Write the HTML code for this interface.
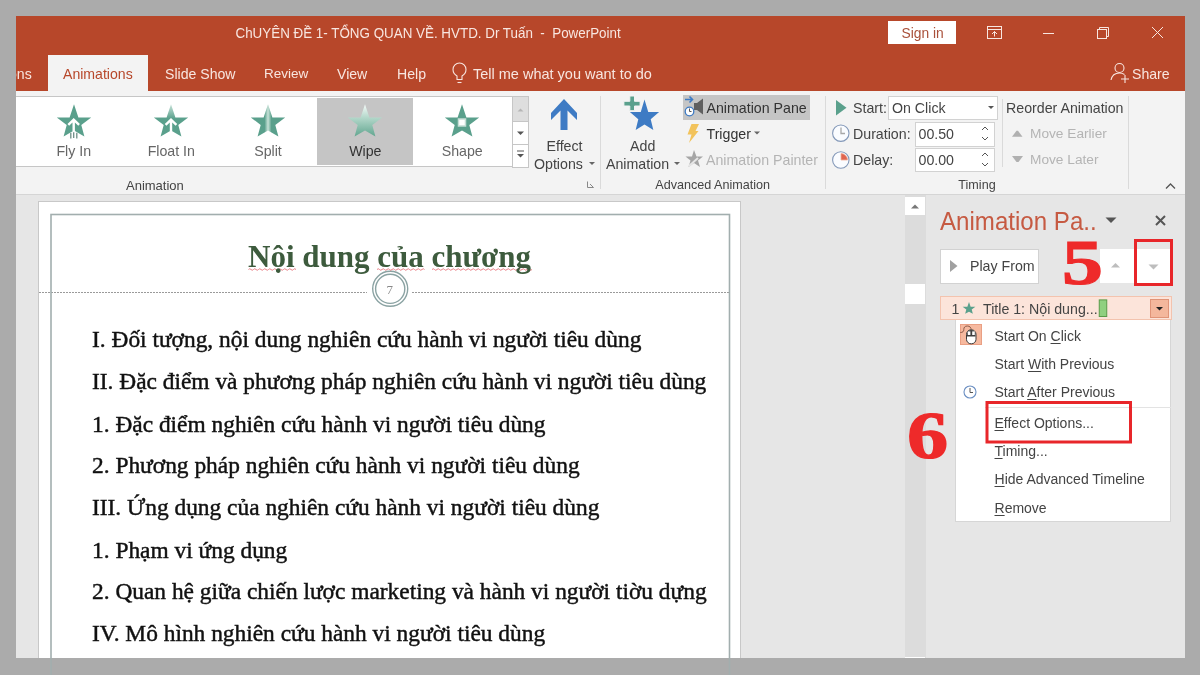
<!DOCTYPE html>
<html><head><meta charset="utf-8">
<style>
*{margin:0;padding:0;box-sizing:border-box}
html,body{width:1200px;height:675px;overflow:hidden;background:#ababab;font-family:"Liberation Sans",sans-serif}
.a{position:absolute}
.t{position:absolute;white-space:nowrap;line-height:1;font-size:14.2px;color:#444}
.c{width:120px;text-align:center}
svg{position:absolute;overflow:visible}
.tab{color:#f8e6e0;font-size:14.1px;top:66.5px}
.srf{font-family:"Liberation Serif",serif}
.body{left:92px;font-size:23.4px;color:#111;-webkit-text-stroke:0.45px #111}
.u{text-decoration:underline;text-underline-offset:2px;text-decoration-thickness:1px}
</style></head><body><div style="position:absolute;left:0;top:0;width:1200px;height:675px;will-change:transform;background:#ababab">
<div class="a" style="left:16px;top:16px;width:1169px;height:642px;background:#e6e6e6"></div>

<!-- ===== title bar ===== -->
<div class="a" style="left:16px;top:16px;width:1169px;height:75px;background:#b7472a"></div>
<div class="t" style="left:235.5px;top:27px;font-size:13.4px;color:#f8e6e0;transform:scaleY(1.1);transform-origin:0 11.3px">ChUYÊN ĐỀ 1- TỔNG QUAN VỀ. HVTD. Dr Tuấn&nbsp; -&nbsp; PowerPoint</div>
<div class="a" style="left:888px;top:21px;width:68px;height:23px;background:#fff"></div>
<div class="t" style="left:901.5px;top:26.5px;font-size:13.8px;color:#a9503a">Sign in</div>
<!-- ribbon display options -->
<svg style="left:0;top:0" width="1200" height="60">
 <g fill="none" stroke="#f8e6e0" stroke-width="1">
  <rect x="987.5" y="26.5" width="14" height="12"/>
  <path d="M987.5 29.5h14M994.5 36.5v-5M992 34l2.5-2.5 2.5 2.5"/>
  <path d="M1043 33.5h11"/>
  <rect x="1097.5" y="29.5" width="9" height="9"/>
  <path d="M1099.5 29.5v-2h9v9h-2"/>
  <path d="M1152 27l11 11M1163 27l-11 11"/>
 </g>
</svg>

<!-- ===== tabs ===== -->
<div class="a" style="left:48px;top:55px;width:100px;height:36px;background:#f3f3f3"></div>
<div class="a" style="left:16px;top:55px;width:30px;height:30px;overflow:hidden"><div class="t tab" style="left:-7px;top:11.5px">ons</div></div>
<div class="t tab" style="left:63px;color:#b7472a">Animations</div>
<div class="t tab" style="left:165px">Slide Show</div>
<div class="t tab" style="left:264px;font-size:13.5px">Review</div>
<div class="t tab" style="left:337px">View</div>
<div class="t tab" style="left:397px">Help</div>
<div class="t tab" style="left:473px;font-size:14.5px">Tell me what you want to do</div>
<svg style="left:0;top:0" width="1200" height="95">
 <g fill="none" stroke="#f8e6e0" stroke-width="1.1">
  <path d="M457 79.5v-3.5c-2.5-1.5-4-4-4-6.5a6.5 6.5 0 0 1 13 0c0 2.5-1.5 5-4 6.5v3.5z"/>
  <path d="M457.5 82.5h4"/>
  <circle cx="1119.5" cy="68" r="4.5"/>
  <path d="M1111 80c1-5 4.5-7 8.5-7 2 0 3.5.5 5 1.5"/>
  <path d="M1125 75v8M1121 79h8"/>
 </g>
</svg>
<div class="t tab" style="left:1132px">Share</div>

<!-- ===== ribbon ===== -->
<div class="a" style="left:16px;top:91px;width:1169px;height:103px;background:#f3f3f3"></div>
<div class="a" style="left:16px;top:194px;width:1169px;height:1px;background:#d5d5d5"></div>
<!-- gallery -->
<div class="a" style="left:16px;top:96px;width:497px;height:71px;background:#fff;border-top:1px solid #c6c6c6;border-bottom:1px solid #c6c6c6"></div>
<div class="a" style="left:317px;top:98px;width:96px;height:67px;background:#c5c5c5"></div>
<div class="a" style="left:512px;top:96px;width:17px;height:72px;background:#fff;border:1px solid #c6c6c6"></div>
<div class="a" style="left:513px;top:97px;width:15px;height:24px;background:#dedede"></div>
<div class="a" style="left:512px;top:121px;width:17px;height:1px;background:#c6c6c6"></div>
<div class="a" style="left:512px;top:144px;width:17px;height:1px;background:#c6c6c6"></div>
<svg style="left:0;top:0" width="600" height="200">
 <defs>
  <linearGradient id="gw" x1="0" y1="0" x2="0" y2="1"><stop offset="0" stop-color="#f6fbf9"/><stop offset="0.4" stop-color="#b6d9cc"/><stop offset="1" stop-color="#62a690"/></linearGradient>
  <linearGradient id="gs" x1="0" y1="0" x2="1" y2="0"><stop offset="0" stop-color="#5aa08c"/><stop offset="0.4" stop-color="#5aa08c"/><stop offset="0.5" stop-color="#c8e2d8"/><stop offset="0.6" stop-color="#5aa08c"/><stop offset="1" stop-color="#5aa08c"/></linearGradient>
  <linearGradient id="gf" x1="0" y1="0" x2="0" y2="1"><stop offset="0" stop-color="#c9e3da"/><stop offset="0.45" stop-color="#5aa08c"/><stop offset="1" stop-color="#5aa08c"/></linearGradient>
  <path id="star" d="M0 -17.8 L4.4 -4.6 L17.2 -4.6 L7.3 3 L10.4 14.4 L0 8.6 L-10.4 14.4 L-7.3 3 L-17.2 -4.6 L-4.4 -4.6Z"/>
 </defs>
 <!-- fly in -->
 <use href="#star" x="74" y="122" fill="#5aa08c"/>
 <path d="M68.3 124.8l5.4-5.2 5.4 5.2M73.7 120.5v11" fill="none" stroke="#fff" stroke-width="2.4"/>
 <path d="M70.8 132.8v5.8M73.7 132.2v5.8M76.8 132.8v5.8" stroke="#6d8f86" stroke-width="1.3"/>
 <!-- float in -->
 <use href="#star" x="171" y="122" fill="url(#gf)"/>
 <path d="M165.6 124.8l5.4-5.2 5.4 5.2M171 120.5v11" fill="none" stroke="#fff" stroke-width="2.4"/>
 <!-- split -->
 <use href="#star" x="268" y="122" fill="url(#gs)"/>
 <!-- wipe -->
 <use href="#star" x="365" y="122" fill="url(#gw)"/>
 <!-- shape -->
 <use href="#star" x="462" y="122" fill="#5aa08c"/>
 <rect x="458.5" y="119" width="7" height="7" fill="#fff" stroke="#c5ddd5" stroke-width="1.5"/>
 <!-- scroll arrows -->
 <path d="M517.5 111.5l3-3 3 3z" fill="#b5b5b5"/>
 <path d="M517 131.5h7l-3.5 3.5z" fill="#555"/>
 <path d="M517 151h7" stroke="#555" stroke-width="1"/>
 <path d="M517 154h7l-3.5 3.5z" fill="#555"/>
</svg>
<div class="t c" style="left:13.8px;top:143.7px;color:#666">Fly In</div>
<div class="t c" style="left:111.3px;top:143.7px;color:#666">Float In</div>
<div class="t c" style="left:208px;top:143.7px;color:#666">Split</div>
<div class="t c" style="left:305.3px;top:143.7px;color:#333">Wipe</div>
<div class="t c" style="left:402.2px;top:143.7px;color:#666">Shape</div>
<div class="t c" style="left:94.9px;top:178.5px;font-size:13px">Animation</div>

<!-- effect options -->
<svg style="left:0;top:0" width="1200" height="200">
 <path d="M564 99L577 113V120L567.5 110.5V130H560.5V110.5L551 120V113Z" fill="#3e7bc4"/>
 <path d="M589 162h6l-3 3z" fill="#666"/>
 <path d="M587.5 181.5v6h6" fill="none" stroke="#888" stroke-width="1"/>
 <path d="M590 184l3.5 3.5" stroke="#888" stroke-width="1"/>
 <path d="M600.5 96v93" stroke="#dadada"/>
 <!-- add animation -->
 <use href="#star" fill="#3e7bc4" transform="translate(644.5 116.3) scale(0.85 0.947)"/>
 <path d="M629.8 96h4.7v5.3h5.6v4.7h-5.6v4.7h-4.7v-4.7h-5.9v-4.7h5.9z" fill="#5aa08c" stroke="#f3f3f3" stroke-width="1"/>
 <path d="M674 162h6l-3 3z" fill="#666"/>
 <path d="M825.5 96v93" stroke="#dadada"/>
</svg>
<div class="t c" style="left:504.5px;top:138.5px">Effect</div>
<div class="t" style="left:534px;top:156.5px">Options</div>
<div class="t c" style="left:582.7px;top:138.5px">Add</div>
<div class="t" style="left:606px;top:156.5px">Animation</div>

<!-- animation pane / trigger / painter -->
<div class="a" style="left:683px;top:95px;width:127px;height:25px;background:#c5c5c5"></div>
<svg style="left:0;top:0" width="1200" height="200">
 <path d="M685 99.5h7M689.5 96.5l3 3-3 3" fill="none" stroke="#3e7bc4" stroke-width="1.6"/>
 <path d="M703 98.5v16l-6-4.5h-3v-7h3z" fill="#5f5f5f"/>
 <circle cx="689.5" cy="111.5" r="4.3" fill="#fff" stroke="#3e7bc4" stroke-width="1.3"/>
 <path d="M689.5 108.5v3h2" fill="none" stroke="#555" stroke-width="1"/>
 <path d="M691.5 124H699L695.5 131H698.5L689 143L691.5 134.5H687.5Z" fill="#f2c35c"/>
 <path d="M694 150l2.5 6.5h6.5l-5 4 2 6.5-6-4-5.5 4 2-6.5-5-4h6.5z" fill="#a5a5a5"/>
 <path d="M689 166l9-8" stroke="#e6e6e6" stroke-width="2"/>
 <path d="M754 131.5h6l-3 3z" fill="#666"/>
</svg>
<div class="t" style="left:706.5px;top:101px;color:#333">Animation Pane</div>
<div class="t" style="left:706.5px;top:127px;color:#333">Trigger</div>
<div class="t" style="left:706px;top:153px;color:#b4b4b4">Animation Painter</div>
<div class="t c" style="left:652.7px;top:178.5px;font-size:12.6px">Advanced Animation</div>

<!-- timing -->
<div class="a" style="left:888px;top:96px;width:110px;height:24px;background:#fff;border:1px solid #d2d2d2"></div>
<div class="a" style="left:914.5px;top:121.5px;width:80px;height:25px;background:#fff;border:1px solid #d2d2d2"></div>
<div class="a" style="left:914.5px;top:147.5px;width:80px;height:24px;background:#fff;border:1px solid #d2d2d2"></div>
<svg style="left:0;top:0" width="1200" height="200">
 <path d="M836 100l10.5 7.8-10.5 7.8z" fill="#5aa08c"/>
 <circle cx="840.8" cy="133.2" r="8.2" fill="#fafcff" stroke="#8398b8" stroke-width="1.1"/>
 <path d="M841 127.5v6h4" fill="none" stroke="#a8a8a8" stroke-width="1.3"/>
 <circle cx="840.8" cy="160" r="8.2" fill="#fafcff" stroke="#8398b8" stroke-width="1.1"/>
 <path d="M841 160v-6.5a6.5 6.5 0 0 1 6.5 6.5z" fill="#e0654f" stroke="#f2b09a" stroke-width="0.8"/>
 <path d="M988 106h6l-3 3z" fill="#555"/>
 <path d="M982 130l3-3 3 3M982 137l3 3 3-3" fill="none" stroke="#555" stroke-width="1"/>
 <path d="M982 156l3-3 3 3M982 163l3 3 3-3" fill="none" stroke="#555" stroke-width="1"/>
 <path d="M1002.5 99v68" stroke="#dadada"/>
 <path d="M1012 136.8l4.5-6h1.5l4.5 6z" fill="#b0b0b0"/>
 <path d="M1012 156h11l-4.5 6h-2z" fill="#b0b0b0"/>
 <path d="M1128.5 96v93" stroke="#dadada"/>
 <path d="M1166 188.5l4.5-4.5 4.5 4.5" fill="none" stroke="#555" stroke-width="1.3"/>
</svg>
<div class="t" style="left:853px;top:101px">Start:</div>
<div class="t" style="left:892px;top:101px">On Click</div>
<div class="t" style="left:853px;top:127px">Duration:</div>
<div class="t" style="left:918.5px;top:127px">00.50</div>
<div class="t" style="left:853px;top:153px">Delay:</div>
<div class="t" style="left:918.5px;top:153px">00.00</div>
<div class="t" style="left:1006px;top:101px">Reorder Animation</div>
<div class="t" style="left:1030px;top:126.5px;font-size:13.7px;color:#b4b4b4">Move Earlier</div>
<div class="t" style="left:1030px;top:153px;font-size:13.7px;color:#b4b4b4">Move Later</div>
<div class="t c" style="left:917px;top:178.5px;font-size:12.6px">Timing</div>

<!-- ===== slide ===== -->
<div class="a" style="left:38px;top:201px;width:703px;height:457px;background:#fff;border:1px solid #c8c8c8;border-bottom:none"></div>
<svg style="left:0;top:0" width="1200" height="675">
 <path d="M39 292.5H367M412 292.5H729" stroke="#9a9a9a" stroke-width="1" stroke-dasharray="2 1"/>
 <circle cx="390.2" cy="288.8" r="17.5" fill="#fff" stroke="#8ba3a3" stroke-width="1.4"/>
 <circle cx="390.2" cy="288.8" r="14.6" fill="none" stroke="#8ba3a3" stroke-width="1.4"/>
 <path d="M248.5 269.5 q1.25 -1.5 2.5 0 t2.5 0 t2.5 0 t2.5 0 t2.5 0 t2.5 0 t2.5 0 t2.5 0 t2.5 0 t2.5 0 t2.5 0 t2.5 0 t2.5 0 t2.5 0 t2.5 0 t2.5 0 t2.5 0 t2.5 0 t2.5 0" fill="none" stroke="#e8737a" stroke-width="0.9"/>
 <path d="M377 269.5 q1.25 -1.5 2.5 0 t2.5 0 t2.5 0 t2.5 0 t2.5 0 t2.5 0 t2.5 0 t2.5 0 t2.5 0 t2.5 0 t2.5 0 t2.5 0 t2.5 0 t2.5 0 t2.5 0 t2.5 0 t2.5 0 t2.5 0 t2.5 0" fill="none" stroke="#e8737a" stroke-width="0.9"/>
 <path d="M432 269.5 q1.25 -1.5 2.5 0 t2.5 0 t2.5 0 t2.5 0 t2.5 0 t2.5 0 t2.5 0 t2.5 0 t2.5 0 t2.5 0 t2.5 0 t2.5 0 t2.5 0 t2.5 0 t2.5 0 t2.5 0 t2.5 0 t2.5 0 t2.5 0 t2.5 0 t2.5 0 t2.5 0 t2.5 0 t2.5 0 t2.5 0 t2.5 0 t2.5 0 t2.5 0 t2.5 0 t2.5 0 t2.5 0 t2.5 0 t2.5 0 t2.5 0 t2.5 0 t2.5 0 t2.5 0 t2.5 0 t2.5 0 t2.5 0" fill="none" stroke="#e8737a" stroke-width="0.9"/>
</svg>
<div class="t srf" style="left:386.5px;top:283px;font-size:13px;color:#888">7</div>
<svg style="left:0;top:0" width="1200" height="658"><rect x="51" y="214.5" width="678.5" height="500" fill="none" stroke="#a2aeae" stroke-width="1.6"/></svg>
<div class="t srf" style="left:248px;top:241px;font-weight:bold;font-size:31px;color:#3d5b3d">Nội dung của chương</div>

<div class="t srf body" style="top:328px">I. Đối tượng, nội dung nghiên cứu hành vi người tiêu dùng</div>
<div class="t srf body" style="top:370px">II. Đặc điểm và phương pháp nghiên cứu hành vi người tiêu dùng</div>
<div class="t srf body" style="top:412.5px">1. Đặc điểm nghiên cứu hành vi người tiêu dùng</div>
<div class="t srf body" style="top:454px">2. Phương pháp nghiên cứu hành vi người tiêu dùng</div>
<div class="t srf body" style="top:496px">III. Ứng dụng của nghiên cứu hành vi người tiêu dùng</div>
<div class="t srf body" style="top:538.5px">1. Phạm vi ứng dụng</div>
<div class="t srf body" style="top:580px">2. Quan hệ giữa chiến lược marketing và hành vi người tiờu dựng</div>
<div class="t srf body" style="top:622px">IV. Mô hình nghiên cứu hành vi người tiêu dùng</div>

<!-- ===== pane ===== -->
<div class="a" style="left:905px;top:195px;width:21px;height:463px;background:#dcdcdc"></div>
<div class="a" style="left:905px;top:197px;width:20px;height:18px;background:#fff"></div>
<div class="a" style="left:905px;top:284px;width:20px;height:20px;background:#fff"></div>
<div class="a" style="left:905px;top:657px;width:20px;height:1px;background:#fff"></div>
<svg style="left:0;top:0" width="1200" height="675">
 <path d="M911 208.5l4-4 4 4z" fill="#777"/>
</svg>
<div class="t" style="left:940px;top:209.5px;font-size:24.1px;color:#c65a42;transform:scaleY(1.08);transform-origin:0 20.4px">Animation Pa..</div>
<svg style="left:0;top:0" width="1200" height="675">
 <path d="M1105.5 217.5h11l-5.5 5.5z" fill="#555"/>
 <path d="M1156 216l9 9M1165 216l-9 9" stroke="#555" stroke-width="2"/>
</svg>
<div class="a" style="left:940px;top:249px;width:99px;height:35px;background:#fff;border:1px solid #d2d2d2"></div>
<svg style="left:0;top:0" width="1200" height="675">
 <path d="M950 260v12l7.5-6z" fill="#a0a0a0"/>
</svg>
<div class="t" style="left:970px;top:258.8px;color:#444">Play From</div>
<div class="a" style="left:1100px;top:249px;width:70px;height:34px;background:#fff"></div>
<svg style="left:0;top:0" width="1200" height="675">
 <path d="M1111 267.5l4.5-4.5 4.5 4.5z" fill="#bdbdbd"/>
 <path d="M1148.5 264.5h10l-5 5z" fill="#bdbdbd"/>
 <rect x="1135.5" y="240.5" width="36" height="44" fill="none" stroke="#e8262a" stroke-width="3"/>
</svg>
<div class="t srf" style="left:1062px;top:232px;font-size:63px;font-weight:bold;color:#ee2a2a;-webkit-text-stroke:1.2px #ee2a2a;transform:scaleX(1.3);transform-origin:0 0">5</div>

<!-- item row -->
<div class="a" style="left:939.5px;top:296px;width:232px;height:24px;background:#fce4da;border:1px solid #f3c3ae"></div>
<div class="t" style="left:951.5px;top:301.5px;color:#444">1</div>
<svg style="left:0;top:0" width="1200" height="675">
 <use href="#star" fill="#5aa08c" transform="translate(969 308.5) scale(0.37)"/>
 <rect x="1099.25" y="299.9" width="7.5" height="16.6" fill="#90d080" stroke="#5a9a4a" stroke-width="1"/>
</svg>
<div class="t" style="left:983px;top:301.5px;color:#444">Title 1: Nội dung...</div>
<div class="a" style="left:1150px;top:299px;width:19px;height:19px;background:#f4b79c;border:1px solid #e09478"></div>
<svg style="left:0;top:0" width="1200" height="675">
 <path d="M1156 307h7l-3.5 3.5z" fill="#222"/>
</svg>

<!-- menu -->
<div class="a" style="left:954.5px;top:320px;width:216.5px;height:202px;background:#fff;border:1px solid #d6d6d6;border-top:none"></div>
<div class="a" style="left:959.5px;top:323.7px;width:22.3px;height:21.8px;background:#f6b99f;border:1px solid #eaa084"></div>
<svg style="left:0;top:0" width="1200" height="675">
 <path d="M971.3 330.5c0-3-1.5-4.5-4-4.5s-3.5 1.5-3.5 3.5c0 2-1 3-3.5 3" fill="none" stroke="#8a5a48" stroke-width="1"/>
 <rect x="966.5" y="329.8" width="9.5" height="14" rx="4.5" fill="#fff" stroke="#3a3a3a" stroke-width="1"/>
 <path d="M967 336.5h8.5v-2.5c0-2.5-2-4-4.25-4s-4.25 1.5-4.25 4z" fill="#3f3f3f"/>
 <rect x="967.8" y="331.4" width="2.6" height="3.6" fill="#fff"/>
 <rect x="972.2" y="331.4" width="2.6" height="3.6" fill="#fff"/>
 <circle cx="970" cy="392" r="6" fill="#fff" stroke="#6b8fc2" stroke-width="1.1"/>
 <path d="M970 388v4.5h3" fill="none" stroke="#555" stroke-width="1"/>
 <path d="M985 407.5h186" stroke="#e3e3e3"/>
 <rect x="987" y="402.5" width="143.5" height="39.5" fill="none" stroke="#e8262a" stroke-width="3"/>
</svg>
<div class="t" style="left:994.5px;top:329.1px;font-size:14px">Start On <span class="u">C</span>lick</div>
<div class="t" style="left:994.5px;top:357.1px;font-size:14px">Start <span class="u">W</span>ith Previous</div>
<div class="t" style="left:994.5px;top:385.4px;font-size:14px">Start <span class="u">A</span>fter Previous</div>
<div class="t" style="left:994.5px;top:416.1px;font-size:14px"><span class="u">E</span>ffect Options...</div>
<div class="t" style="left:994.5px;top:444.1px;font-size:14px"><span class="u">T</span>iming...</div>
<div class="t" style="left:994.5px;top:472.1px;font-size:14px"><span class="u">H</span>ide Advanced Timeline</div>
<div class="t" style="left:994.5px;top:500.8px;font-size:14px"><span class="u">R</span>emove</div>
<div class="t srf" style="left:907px;top:402px;font-size:67px;font-weight:bold;color:#ee2a2a;-webkit-text-stroke:1.2px #ee2a2a;transform:scaleX(1.23);transform-origin:0 0">6</div>

</div></body></html>
